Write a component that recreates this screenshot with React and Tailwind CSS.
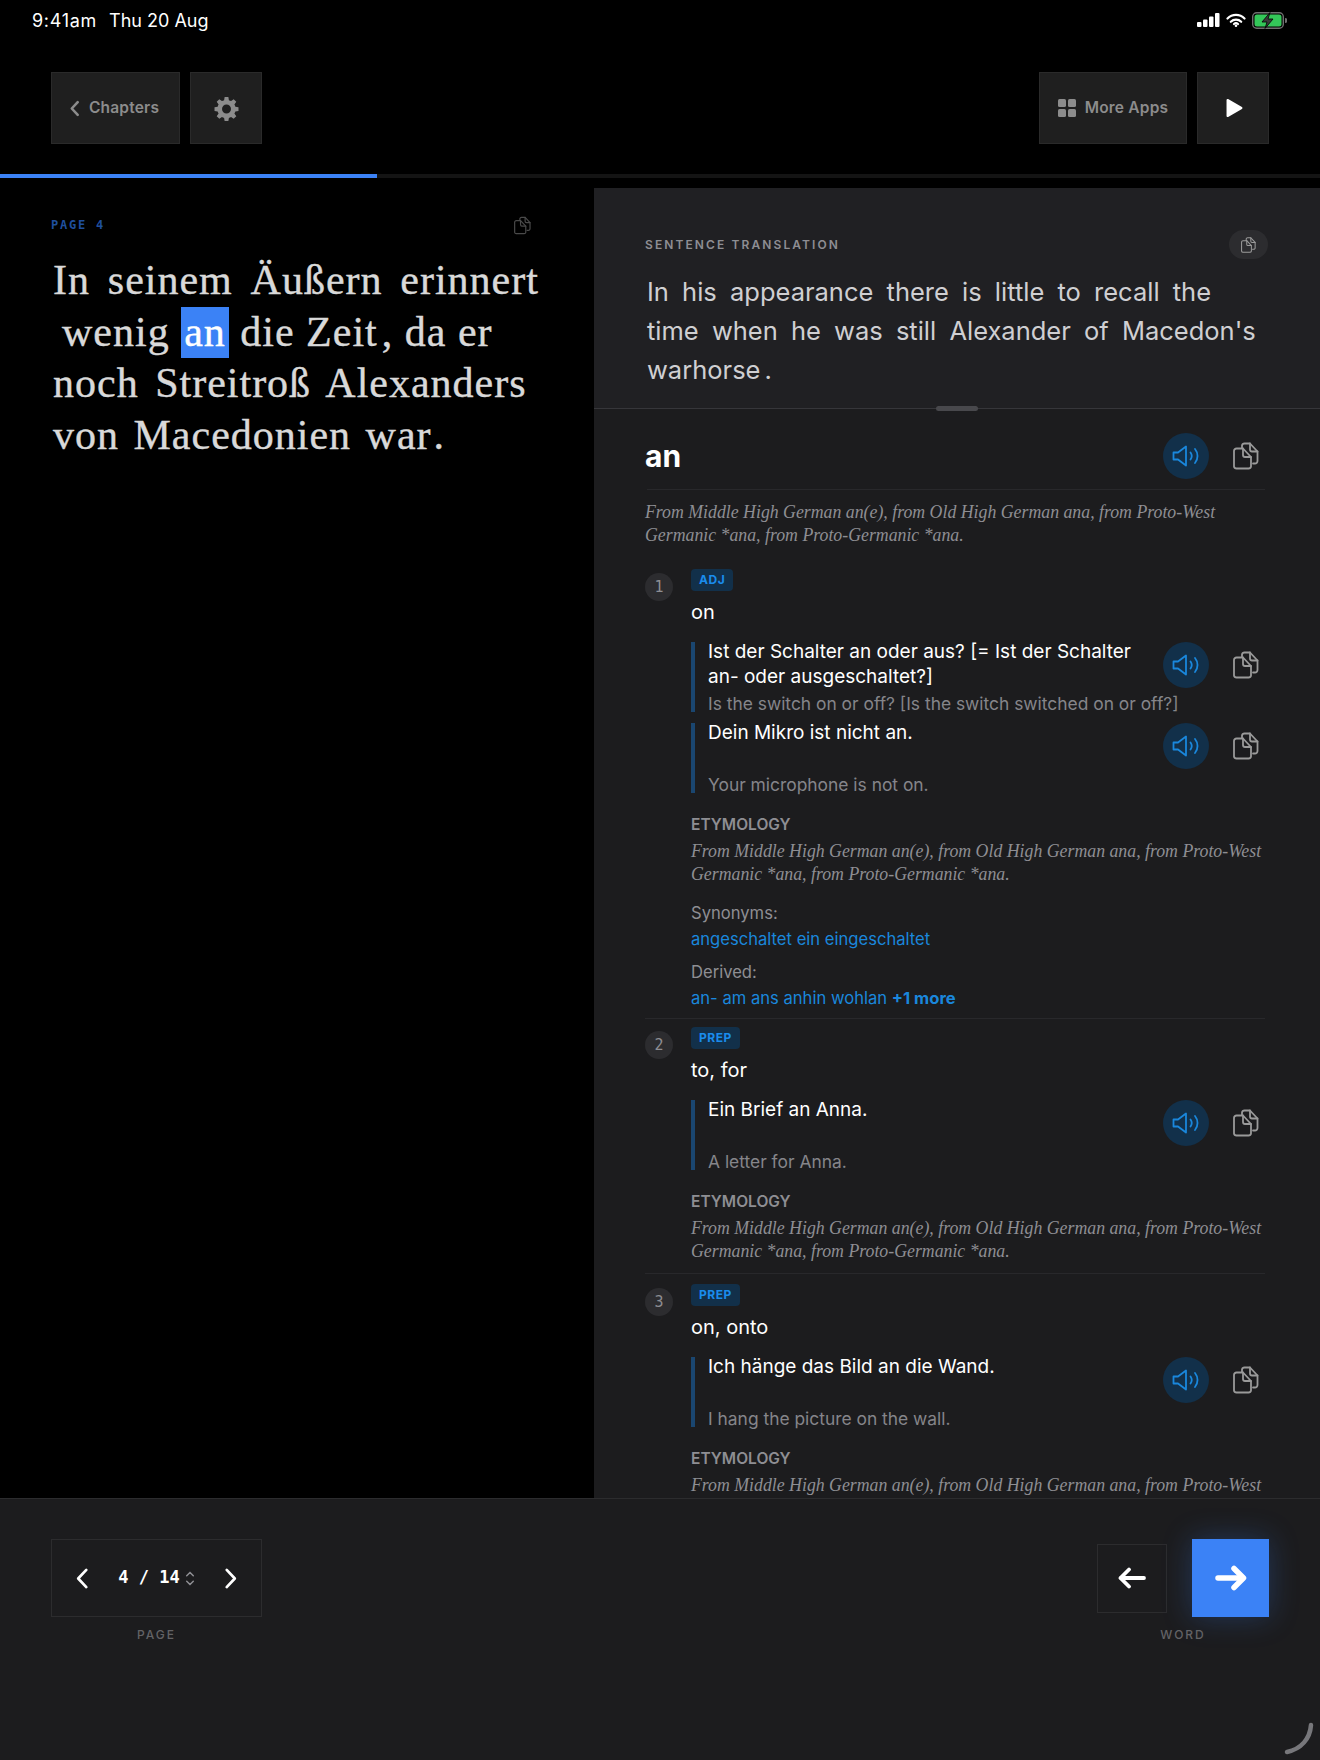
const sans = "font-['Inter','Noto_Sans',sans-serif]";

const etymology =
  "From Middle High German an(e), from Old High German ana, from Proto-West Germanic *ana, from Proto-Germanic *ana.";

function CopyIcon({ className }) {
  return (
    <svg viewBox="0 0 26 28" fill="none" stroke="currentColor" strokeWidth="1.8" strokeLinejoin="round" strokeLinecap="round" className={className}>
      <path d="M9 6V3.5A2.5 2.5 0 0 1 11.5 1.5H17l7.5 8v9.5a2.5 2.5 0 0 1-2.5 2.5h-2" />
      <path d="M17 1.5v6a2 2 0 0 0 2 2h5.5" />
      <path d="M3.5 6.5H10l8 8.5v9.500a2.500 2.500 0 0 1-2.500 2H3.500A2.500 2.500 0 0 1 1 24.500V9a2.500 2.500 0 0 1 2.500-2.500z" />
      <path d="M10 6.500V13a2 2 0 0 0 2 2h6" />
    </svg>
  );
}

function SpeakerIcon() {
  return (
    <svg viewBox="0 0 28 22" fill="none" stroke="#1a87dc" strokeWidth="1.8" strokeLinejoin="round" strokeLinecap="round" className="h-[22px] w-[28px]">
      <path d="M1.500 7.500h4.500L14 1.500v19L6 14.500H1.500z" />
      <path d="M18.500 7.500a6 6 0 0 1 0 7" />
      <path d="M23 4a11 11 0 0 1 0 14" />
    </svg>
  );
}

function AudioActions() {
  return (
    <div className="flex shrink-0 items-center gap-[24px] pr-[6px]">
      <div className="flex h-[46px] w-[46px] items-center justify-center rounded-full bg-[#12304a]">
        <SpeakerIcon />
      </div>
      <CopyIcon className="h-[28px] w-[26px] text-[#9a9a9a]" />
    </div>
  );
}

function Example({ de, en }) {
  return (
    <div className="h-[70px] border-l-[4px] border-[#1a4670] pl-[13px]">
      <div className="flex h-[46px] items-start justify-between">
        <div className="-mt-[3px] w-[450px] text-[19px] leading-[25px] text-white">{de}</div>
        <AudioActions />
      </div>
      <div className="mt-[4px] whitespace-nowrap text-[17.4px] leading-[24px] text-[#85858a]">{en}</div>
    </div>
  );
}

function Etymology() {
  return (
    <>
      <div className="mt-[22px] text-[15.5px] font-semibold leading-[20px] text-[#8e8e93]">ETYMOLOGY</div>
      <p className="mt-[5px] font-['Liberation_Serif',serif] text-[17.8px] italic leading-[23px] text-[#8e8e93]">
        {etymology}
      </p>
    </>
  );
}

function Sense({ n, tag, gloss, children }) {
  return (
    <div className="flex">
      <div className="w-[46px] shrink-0 pt-[4px]">
        <div className="flex h-[28px] w-[28px] items-center justify-center rounded-full bg-[#2c2c2f] font-['DejaVu_Sans_Mono',monospace] text-[15px] text-[#8e8e93]">
          {n}
        </div>
      </div>
      <div className="min-w-0 flex-1">
        <span className="flex h-[22px] w-fit items-center rounded-[4px] bg-[#12304a] px-[8px] text-[12px] font-bold tracking-[0.5px] text-[#1a8cec]">
          {tag}
        </span>
        <div className="mt-[7px] text-[20px] leading-[28px] text-white">{gloss}</div>
        {children}
      </div>
    </div>
  );
}

function LeftPanel() {
  return (
    <section className="w-[594px] shrink-0 bg-black pl-[53px] pr-[50px] pt-[27px]">
      <div className="flex h-[20px] items-center justify-between pr-[13px]">
        <span className="-ml-[2px] font-['DejaVu_Sans_Mono',monospace] text-[12px] font-bold tracking-[1.8px] text-[#1f4f9e]">
          PAGE&nbsp;4
        </span>
        <CopyIcon className="h-[21px] w-[17px] text-[#4a4a4a]" />
      </div>
      <p className="mt-[20px] whitespace-nowrap font-['Liberation_Serif',serif] text-[42px] leading-[51.5px] tracking-[1px] text-[#d9d9d9] [-webkit-text-stroke:0.4px] [word-spacing:5px]">
        <span className="[word-spacing:6.300px]">In seinem Äußern erinnert</span>
        <br />
        <span className="[word-spacing:0px]">
          <span className="ml-[9px]">wenig</span>{" "}
          <span className="inline-block bg-[#3b82f6] px-[3px] text-white">an</span> die Zeit<span className="ml-[4px]">,</span> da er
        </span>
        <br />
        noch Streitroß Alexanders
        <br />
        <span className="[word-spacing:3px]">
          von Macedonien war<span className="ml-[2px]">.</span>
        </span>
      </p>
    </section>
  );
}

function RightPanel() {
  return (
    <section className="flex min-w-0 flex-1 flex-col overflow-hidden bg-[#1c1c1e]">
      <div className="relative h-[221px] shrink-0 border-b border-[#36363a] bg-[#202023] pl-[51px] pr-[52px] pt-[42px]">
        <div className="flex h-[29px] items-center justify-between">
          <span className="text-[12px] font-semibold tracking-[2.1px] text-[#8e8e93]">SENTENCE TRANSLATION</span>
          <div className="flex h-[29px] w-[39px] items-center justify-center rounded-full bg-[#2c2c2f]">
            <CopyIcon className="h-[18px] w-[15px] text-[#9a9a9a]" />
          </div>
        </div>
        <p className="ml-[2px] mt-[13px] whitespace-nowrap text-[25.5px] leading-[39px] text-[#cfcfd2] [word-spacing:6px]">
          In his appearance there is little to recall the
          <br />
          time when he was still Alexander of Macedon's
          <br />
          warhorse<span className="ml-[4px]">.</span>
        </p>
        <div className="absolute bottom-[-3px] left-[342px] h-[5px] w-[42px] rounded-full bg-[#48484c]" />
      </div>

      <div className="pl-[51px] pr-[55px]">
        <div className="ml-[2px] flex h-[81px] items-center justify-between border-b border-[#28282b] pt-[14px]">
          <span className="-ml-[2px] text-[30px] font-bold text-white">an</span>
          <AudioActions />
        </div>
        <p className="mt-[11px] font-['Liberation_Serif',serif] text-[17.8px] italic leading-[23px] text-[#8e8e93]">
          {etymology}
        </p>

        <div className="mt-[22px] border-b border-[#28282b] pb-[8px]">
          <Sense n="1" tag="ADJ" gloss="on">
            <div className="mt-[16px] flex flex-col gap-[11px]">
              <Example
                de="Ist der Schalter an oder aus? [= Ist der Schalter an- oder ausgeschaltet?]"
                en="Is the switch on or off? [Is the switch switched on or off?]"
              />
              <Example de="Dein Mikro ist nicht an." en="Your microphone is not on." />
            </div>
            <Etymology />
            <div className="mt-[15px] text-[16.6px] leading-[24px] text-[#8e8e93]">Synonyms:</div>
            <div className="mt-[2px] text-[16.6px] leading-[24px] text-[#1a87dc]">angeschaltet ein eingeschaltet</div>
            <div className="mt-[9px] text-[16.6px] leading-[24px] text-[#8e8e93]">Derived:</div>
            <div className="mt-[2px] text-[16.6px] leading-[24px] text-[#1a87dc]">
              an- am ans anhin wohlan <span className="font-bold">+1 more</span>
            </div>
          </Sense>
        </div>

        <div className="mt-[8px] border-b border-[#28282b] pb-[10px]">
          <Sense n="2" tag="PREP" gloss="to, for">
            <div className="mt-[16px]">
              <Example de="Ein Brief an Anna." en="A letter for Anna." />
            </div>
            <Etymology />
          </Sense>
        </div>

        <div className="mt-[10px]">
          <Sense n="3" tag="PREP" gloss="on, onto">
            <div className="mt-[16px]">
              <Example de="Ich hänge das Bild an die Wand." en="I hang the picture on the wall." />
            </div>
            <Etymology />
          </Sense>
        </div>
      </div>
    </section>
  );
}

function StatusBar() {
  return (
    <div className="flex h-[40px] items-center justify-between pl-[32px] pr-[33px] text-[18px] text-white">
      <div className="flex gap-[12px]">
        <span className="tracking-[0.7px]">9:41am</span>
        <span>Thu 20 Aug</span>
      </div>
      <div className="flex items-center gap-[6px]">
        <svg viewBox="0 0 23 14" className="h-[14px] w-[23px]" fill="white">
          <rect x="0" y="9" width="4.500" height="5" rx="1" />
          <rect x="6" y="6.500" width="4.500" height="7.500" rx="1" />
          <rect x="12" y="3.500" width="4.500" height="10.500" rx="1" />
          <rect x="18" y="0" width="4.500" height="14" rx="1" />
        </svg>
        <svg viewBox="0 0 20 15" className="h-[15px] w-[20px]" fill="none" stroke="white" strokeWidth="2.200" strokeLinecap="round">
          <path d="M1.500 5.500a12 12 0 0 1 17 0" />
          <path d="M4.800 8.800a7.400 7.400 0 0 1 10.400 0" />
          <circle cx="10" cy="12.700" r="1.300" fill="white" stroke="none" />
          <path d="M8 11a3 3 0 0 1 4 0" />
        </svg>
        <svg viewBox="0 0 35 17" className="h-[17px] w-[35px]">
          <rect x="0.700" y="0.700" width="30.600" height="15.600" rx="4" fill="none" stroke="#6f6f6f" strokeWidth="1.400" />
          <rect x="2.500" y="2.500" width="27" height="12" rx="2.500" fill="#34c759" />
          <path d="M33 6v5a2.500 2.500 0 0 0 0-5z" fill="#6f6f6f" />
          <path d="M18 0.500 10 10h5l-2 6.500 8-9.500h-5z" fill="#3a3a3a" stroke="black" strokeWidth="0.800" />
        </svg>
      </div>
    </div>
  );
}

function TopButton({ className, children }) {
  return (
    <button className={`flex h-[72px] items-center justify-center border border-[#2a2a2a] bg-[#1f1f1f] text-[15.5px] font-semibold tracking-[0.2px] text-[#8c8c8c] ${className}`}>
      {children}
    </button>
  );
}

function Toolbar() {
  return (
    <div className="flex justify-between pl-[51px] pr-[51px] pt-[32px]">
      <div className="flex gap-[10px]">
        <TopButton className="w-[129px] gap-[9px]">
          <svg viewBox="0 0 12 18" className="-ml-[3px] h-[17px] w-[11px]" fill="none" stroke="#8c8c8c" strokeWidth="2.800" strokeLinecap="round" strokeLinejoin="round">
            <path d="M9.500 2 3 9l6.500 7" />
          </svg>
          Chapters
        </TopButton>
        <TopButton className="w-[72px]">
          <svg viewBox="0 0 24 24" className="h-[25px] w-[25px]" fill="#8c8c8c">
            <path fillRule="evenodd" d="M13.800 1h-3.600l-.5 3a8.500 8.500 0 0 0-2.100.9L5.100 3.100 2.600 5.600l1.800 2.500A8.500 8.500 0 0 0 3.500 10.200l-3 .5v3.600l3 .5c.2.700.5 1.400.9 2.100l-1.800 2.500 2.500 2.500 2.500-1.800c.7.4 1.400.7 2.100.9l.5 3h3.600l.5-3c.7-.2 1.400-.5 2.100-.9l2.500 1.800 2.500-2.500-1.800-2.500c.4-.7.7-1.400.9-2.100l3-.5v-3.600l-3-.5a8.500 8.500 0 0 0-.9-2.100l1.800-2.500-2.500-2.500-2.500 1.800a8.500 8.500 0 0 0-2.100-.9zM12 8.200a4.300 4.300 0 1 1 0 8.600 4.300 4.300 0 0 1 0-8.600z" />
          </svg>
        </TopButton>
      </div>
      <div className="flex gap-[10px]">
        <TopButton className="w-[148px] gap-[9px]">
          <svg viewBox="0 0 18 18" className="h-[18px] w-[18px]" fill="#8c8c8c">
            <rect x="0" y="0" width="8" height="8" rx="1.500" />
            <rect x="10" y="0" width="8" height="8" rx="1.500" />
            <rect x="0" y="10" width="8" height="8" rx="1.500" />
            <rect x="10" y="10" width="8" height="8" rx="1.500" />
          </svg>
          More Apps
        </TopButton>
        <TopButton className="w-[72px]">
          <svg viewBox="0 0 16 18" className="ml-[3px] h-[20px] w-[17px]" fill="white" stroke="white" strokeWidth="2" strokeLinejoin="round">
            <path d="M1.500 1.500 14.500 9 1.500 16.500z" />
          </svg>
        </TopButton>
      </div>
    </div>
  );
}

function Footer() {
  return (
    <footer className="relative h-[262px] shrink-0 border-t border-[#2c2c2e] bg-[#1c1c1e] pl-[51px] pr-[51px] pt-[40px]">
      <div className="flex items-start justify-between">
        <div className="flex w-[211px] flex-col items-center">
          <div className="flex h-[78px] w-full items-center justify-between border border-[#2c2c2e] px-[23px]">
            <svg viewBox="0 0 14 22" className="h-[21px] w-[14px]" fill="none" stroke="white" strokeWidth="2.800" strokeLinecap="round" strokeLinejoin="round">
              <path d="M11.500 2 3 11l8.500 9" />
            </svg>
            <div className="flex items-center gap-[5px]">
              <span className="whitespace-pre font-['DejaVu_Sans_Mono',monospace] text-[17px] font-bold text-white">4 / 14</span>
              <svg viewBox="0 0 10 16" className="h-[15px] w-[10px]" fill="none" stroke="#8e8e93" strokeWidth="1.600" strokeLinecap="round" strokeLinejoin="round">
                <path d="M1.500 5 5 1.500 8.500 5" />
                <path d="M1.500 11 5 14.500 8.500 11" />
              </svg>
            </div>
            <svg viewBox="0 0 14 22" className="h-[21px] w-[14px]" fill="none" stroke="white" strokeWidth="2.800" strokeLinecap="round" strokeLinejoin="round">
              <path d="M2.500 2 11 11l-8.500 9" />
            </svg>
          </div>
          <span className="mt-[9px] text-[12px] font-medium tracking-[2px] text-[#636366]">PAGE</span>
        </div>

        <div className="flex w-[172px] flex-col items-center">
          <div className="flex w-full items-center justify-between">
            <button className="flex h-[69px] w-[70px] items-center justify-center border border-[#2c2c2e]">
              <svg viewBox="0 0 28 22" className="h-[22px] w-[28px]" fill="none" stroke="white" strokeWidth="3.800" strokeLinecap="round" strokeLinejoin="round">
                <path d="M26 11H3" />
                <path d="M11 2.500 2.500 11l8.500 8.500" />
              </svg>
            </button>
            <button className="flex h-[78px] w-[77px] items-center justify-center bg-[#3b82f6] shadow-[0_0_30px_rgba(59,130,246,0.28)]">
              <svg viewBox="0 0 32 26" className="h-[26px] w-[32px]" fill="none" stroke="white" strokeWidth="5.500" strokeLinecap="round" strokeLinejoin="round">
                <path d="M3 13H27" />
                <path d="M19 3.500 28.500 13 19 22.500" />
              </svg>
            </button>
          </div>
          <span className="mt-[9px] text-[12px] font-medium tracking-[2px] text-[#636366]">WORD</span>
        </div>
      </div>
      <svg viewBox="0 0 32 34" className="absolute bottom-[4px] right-[6px] h-[34px] w-[32px]" fill="none" stroke="#77777b" strokeWidth="4.500" strokeLinecap="round">
        <path d="M29 3c-1 14-10 24-24 27" />
      </svg>
    </footer>
  );
}

export default function App() {
  return (
    <div className={`flex h-[1760px] w-[1320px] flex-col overflow-hidden bg-black ${sans}`}>
      <StatusBar />
      <Toolbar />
      <div className="mt-[30px] h-[4px] shrink-0 bg-[#141414]">
        <div className="h-full w-[377px] bg-[#3b82f6]" />
      </div>
      <main className="mt-[10px] flex min-h-0 flex-1">
        <LeftPanel />
        <RightPanel />
      </main>
      <Footer />
    </div>
  );
}
